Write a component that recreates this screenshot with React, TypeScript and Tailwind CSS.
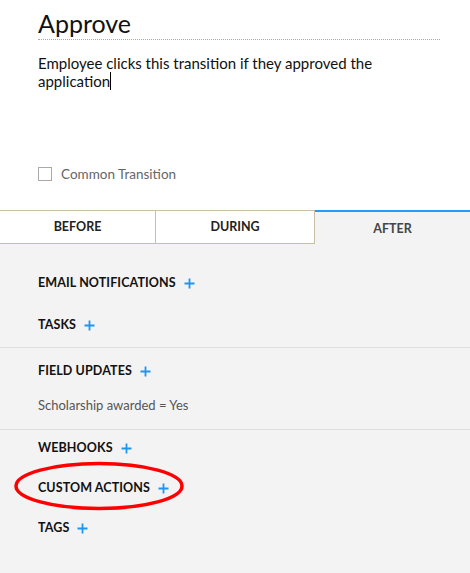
import React from "react"

const font = { fontFamily: "Lato, 'Open Sans', sans-serif" }

function Plus() {
  return (
    <svg width="11" height="11" viewBox="0 0 11 11" className="ml-[8px] inline-block">
      <path d="M5.5 0.5v10M0.5 5.5h10" stroke="#1e96f0" strokeWidth="1.8" />
    </svg>
  )
}

function Heading({ label }: { label: string }) {
  return (
    <div className="flex items-center h-[19px] text-[12.5px] font-bold text-[#111] tracking-[0.1px]">
      {label}
      <Plus />
    </div>
  )
}

export default function App() {
  return (
    <div className="min-h-screen flex flex-col bg-white" style={font}>
      <div className="pl-[38px] pr-[30px] pt-[8px]">
        <h1 className="text-[25px] leading-[30px] text-[#111] border-b border-dotted border-[#aaa] pb-[1px]">
          Approve
        </h1>
        <p className="mt-[14px] text-[15px] leading-[18px] text-[#111] pr-[10px]">
          Employee clicks this transition if they approved the application
          <span className="inline-block w-[1px] h-[18px] bg-black align-top" />
        </p>
        <label className="mt-[74px] flex items-center gap-[9px] text-[13.5px] text-[#666]">
          <span className="w-[14px] h-[14px] border border-[#aaa] bg-white" />
          Common Transition
        </label>
      </div>

      <div className="mt-[26px] grid grid-cols-[156px_159px_1fr] text-[12.5px] font-bold">
        <div className="h-[34px] flex items-center justify-center border-y border-r border-[#c9bea6] text-[#222]">
          BEFORE
        </div>
        <div className="h-[34px] flex items-center justify-center border-y border-r border-[#c9bea6] text-[#222]">
          DURING
        </div>
        <div className="h-[34px] flex items-center justify-center border-t-2 border-[#2a9af0] bg-[#f3f3f3] text-[#444] pt-[3px]">
          AFTER
        </div>
      </div>

      <div className="flex-1 bg-[#f3f3f3]">
        <div className="px-[38px] pt-[30px] pb-[12px] flex flex-col gap-[23px]">
          <Heading label="EMAIL NOTIFICATIONS" />
          <Heading label="TASKS" />
        </div>
        <div className="border-t border-[#dedede] px-[38px] pt-[14px] pb-[14px] flex flex-col gap-[15px]">
          <Heading label="FIELD UPDATES" />
          <div className="text-[13px] leading-[19px] text-[#555]">Scholarship awarded = Yes</div>
        </div>
        <div className="border-t border-[#dedede] px-[38px] pt-[9px] flex flex-col gap-[21px]">
          <Heading label="WEBHOOKS" />
          <div className="relative">
            <Heading label="CUSTOM ACTIONS" />
            <svg
              className="absolute left-[-25px] top-[-19px] pointer-events-none"
              width="172"
              height="52"
              viewBox="0 0 172 52"
            >
              <ellipse cx="86" cy="26" rx="83" ry="22.5" fill="none" stroke="#f00" strokeWidth="3.5" />
            </svg>
          </div>
          <Heading label="TAGS" />
        </div>
      </div>
    </div>
  )
}
